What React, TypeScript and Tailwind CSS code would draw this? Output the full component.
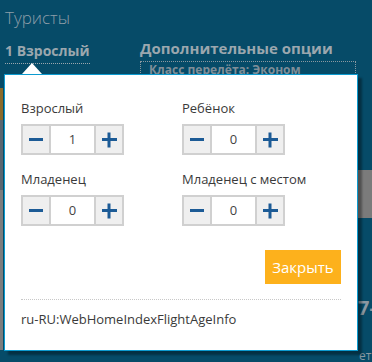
import React from "react";

function Counter({ value }: { value: number }) {
  return (
    <div className="flex h-[31px] w-[103px] border-2 border-[#d0d0d0] bg-white">
      <div className="flex w-[26px] items-center justify-center bg-[#efefef]">
        <span className="block h-[3px] w-[14px] bg-[#1c5b96]" />
      </div>
      <div className="w-[2px] bg-[#d0d0d0]" />
      <div className="flex w-[43px] items-center justify-center text-[13px] text-[#444]">{value}</div>
      <div className="w-[2px] bg-[#d0d0d0]" />
      <div className="relative flex w-[26px] items-center justify-center bg-[#efefef]">
        <span className="block h-[3px] w-[15px] bg-[#1c5b96]" />
        <span className="absolute left-1/2 top-1/2 block h-[15px] w-[3px] -translate-x-1/2 -translate-y-1/2 bg-[#1c5b96]" />
      </div>
    </div>
  );
}

function Field({ label, value }: { label: string; value: number }) {
  return (
    <div className="flex flex-col">
      <div className="mb-[7px] h-[18px] text-[13px] leading-[18px] text-[#3a3a3a]">{label}</div>
      <Counter value={value} />
    </div>
  );
}

export default function App() {
  return (
    <div
      className="relative h-[362px] w-[372px] overflow-hidden bg-[#064b68]"
      style={{ fontFamily: "'Open Sans', 'Liberation Sans', sans-serif" }}
    >
      {/* background fragments */}
      <div className="absolute left-0 top-[88px] h-[32px] w-[3px] bg-[#8a6a2a]" />
      <div className="absolute left-0 top-[120px] h-[70px] w-[3px] bg-[#5a6670]" />
      <div className="absolute left-0 top-[190px] h-[160px] w-[3px] bg-[#7d7d7d]" />
      <div className="absolute right-0 top-[170px] h-[48px] w-[14px] bg-[#7b7b7b]" />
      <div className="absolute left-[358px] top-[296px] whitespace-nowrap text-[20px] font-bold leading-[24px] text-[#8a98a2]">7-</div>
      <div className="absolute left-[359px] top-[349px] whitespace-nowrap text-[12px] leading-[14px] text-[#8a98a2]">ети</div>

      <div className="flex flex-col px-[5px] pt-[6px]">
        <div className="text-[17px] font-light leading-[24px] text-[#8e9ea8]">Туристы</div>
        <div className="mt-[8px] flex">
          <div className="w-[135px] shrink-0">
            <div className="inline-block whitespace-nowrap border-b border-dotted border-[#9aa6ad] pb-[2px] text-[14px] font-bold leading-[20px] text-[#9ba7ae]">
              1 Взрослый
            </div>
          </div>
          <div className="flex flex-col">
            <div className="whitespace-nowrap text-[15px] font-bold leading-[20px] text-[#9ba7ae]">Дополнительные опции</div>
            <div className="mt-[3px] h-[30px] w-[216px] border border-dotted border-[#8b98a0] px-[8px] text-[12px] font-bold leading-[16px] text-[#7f8e98]">
              Класс перелёта: Эконом
            </div>
          </div>
        </div>
      </div>

      {/* popup */}
      <div className="absolute left-[4px] top-[74px] h-[277px] w-[354px] border-[1.5px] border-[#0c9bd0] bg-white shadow-[4px_4px_2px_rgba(0,0,0,0.35)]">
        <div className="absolute left-[17px] top-[-12px] h-0 w-0 border-x-[10px] border-b-[11px] border-x-transparent border-b-white" />
        <div className="flex flex-col px-[16px] pt-[24px]">
          <div className="grid grid-cols-[161px_161px] gap-y-[15px]">
            <Field label="Взрослый" value={1} />
            <Field label="Ребёнок" value={0} />
            <Field label="Младенец" value={0} />
            <Field label="Младенец с местом" value={0} />
          </div>
          <div className="mt-[24px] flex justify-end">
            <button className="h-[34px] w-[76px] bg-[#fdb11c] text-[15px] text-white">Закрыть</button>
          </div>
          <div className="mt-[15px] border-t border-dotted border-[#c8c8c8]" />
          <div className="mt-[10px] text-[13px] leading-[18px] text-[#3a3a3a]">ru-RU:WebHomeIndexFlightAgeInfo</div>
        </div>
      </div>
    </div>
  );
}
